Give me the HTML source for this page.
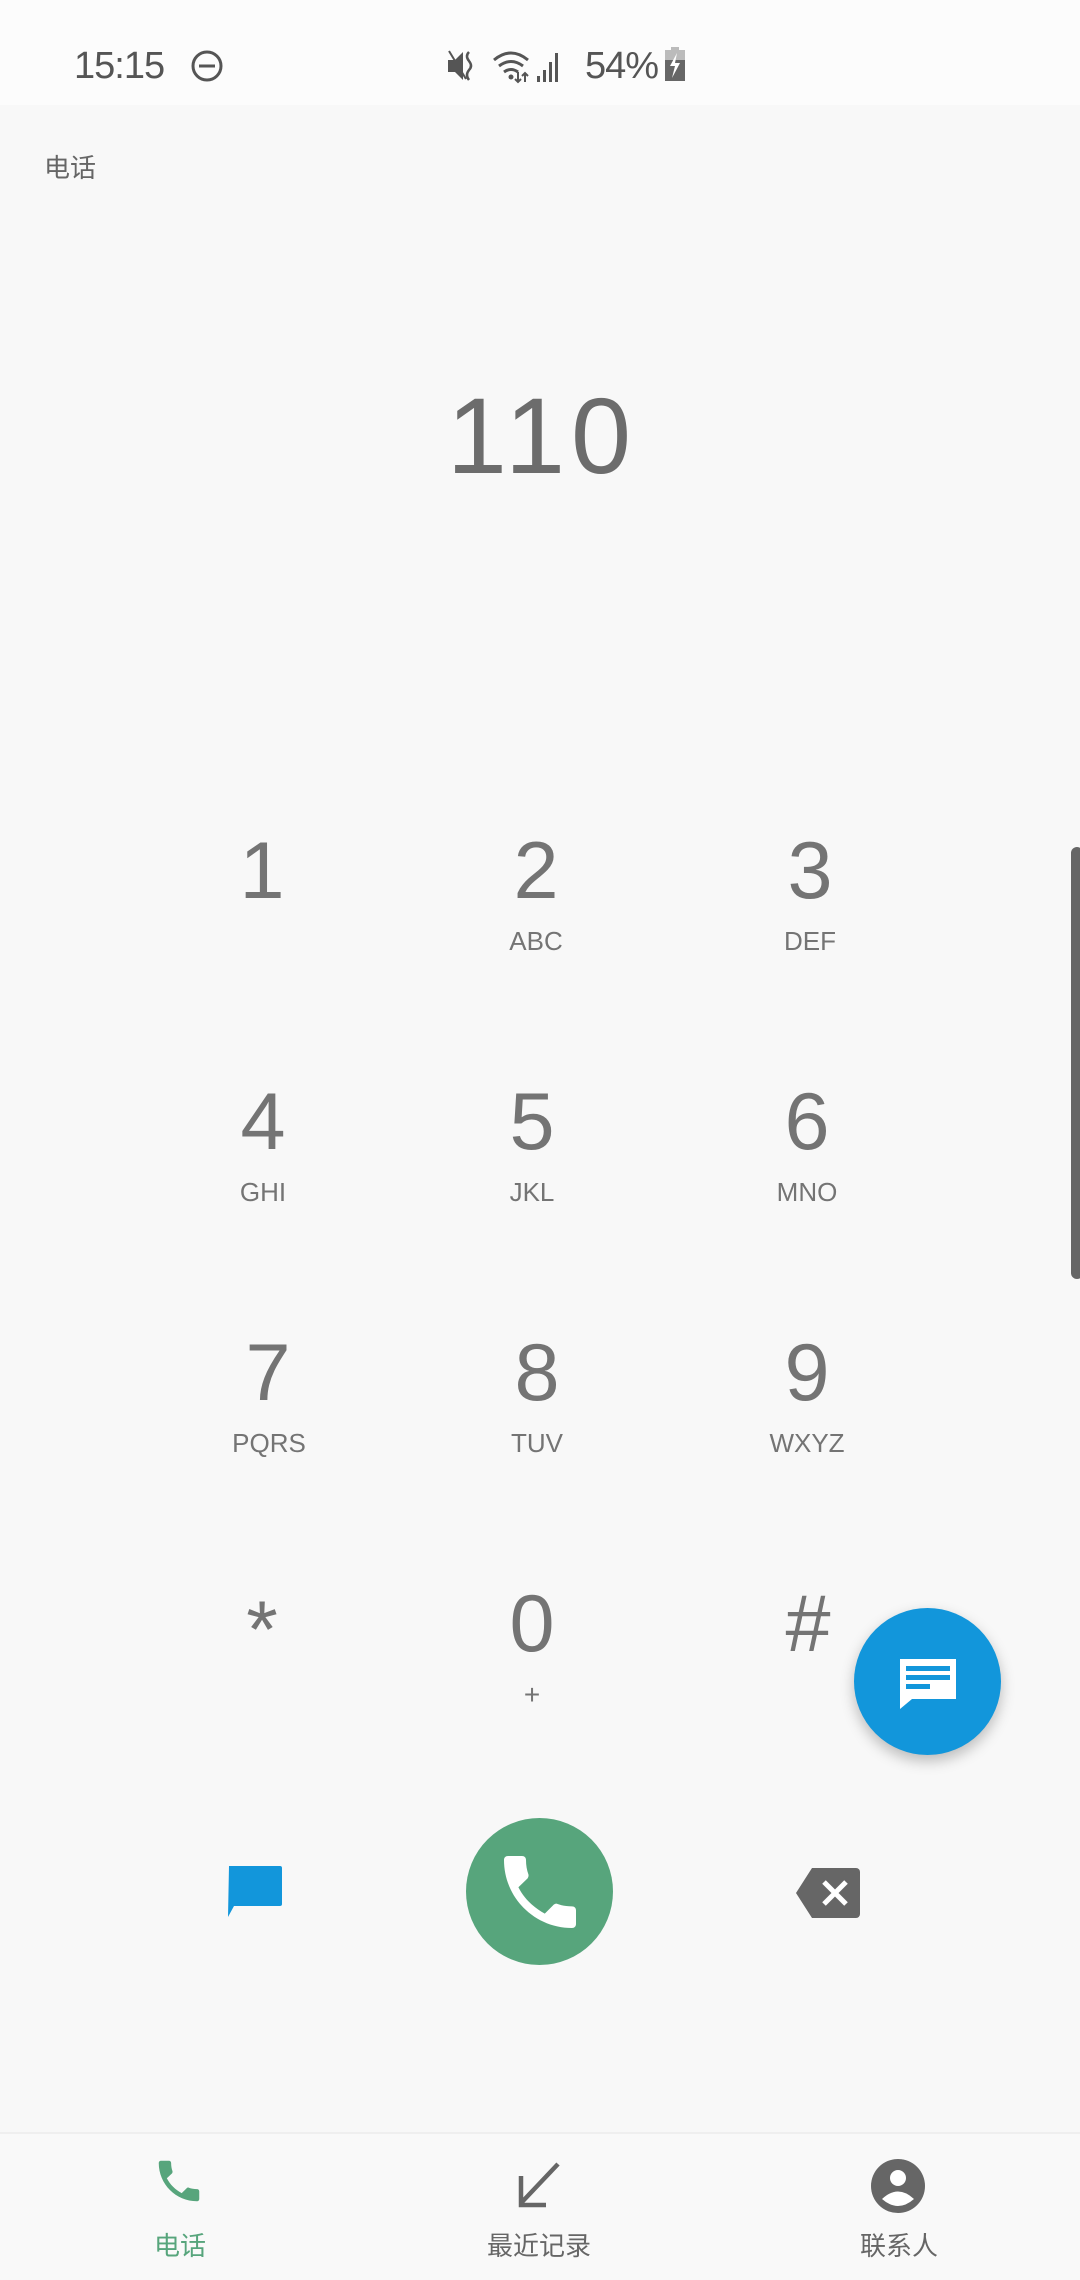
<!DOCTYPE html>
<html><head><meta charset="utf-8"><style>
*{margin:0;padding:0;box-sizing:border-box}
body{width:1080px;height:2280px;background:#f8f8f8;position:relative;overflow:hidden;font-family:"Liberation Sans","Noto Sans CJK SC",sans-serif;color:#747474}
.a{position:absolute;line-height:1;white-space:nowrap}
.d{font-size:81px;width:200px;text-align:center;margin-left:-100px}
.l{font-size:26px;width:200px;text-align:center;margin-left:-100px}
.n{font-size:26px;width:200px;text-align:center;margin-left:-100px;font-family:"Noto Sans CJK SC",sans-serif}
</style></head><body>
<div style="position:absolute;left:0;top:0;width:1080px;height:105px;background:#fcfcfc"></div>
<div class="a" style="left:74px;top:47px;font-size:38px;color:#555;letter-spacing:-1px">15:15</div>
<svg class="a" style="left:190px;top:49px" width="34" height="34" viewBox="0 0 34 34"><circle cx="17" cy="17" r="14" fill="none" stroke="#555" stroke-width="3"/><rect x="9" y="15.5" width="16" height="3" fill="#555"/></svg>
<svg class="a" style="left:446px;top:48px" width="240" height="36" viewBox="0 0 240 36">
<path d="M2 12h7l8-8v28l-8-8H2z" fill="#555"/><path d="M23 4q-4 4 0 9q4 5 0 9q-4 5 0 10" fill="none" stroke="#555" stroke-width="2.5"/><path d="M3 3l17 28" stroke="#555" stroke-width="2"/>
<path d="M48 12q17-14 34 0M53 18q12-9 24 0M58 24q7-5 14 0" fill="none" stroke="#555" stroke-width="3"/><circle cx="65" cy="29" r="2.5" fill="#555"/>
<path d="M72 24v10M69 31l3 3 3-3M79 34v-9M76 28l3-3 3 3" stroke="#555" stroke-width="2" fill="none"/>
<rect x="91" y="28" width="3" height="6" fill="#555"/><rect x="97" y="22" width="3" height="12" fill="#555"/><rect x="103" y="14" width="3" height="20" fill="#555"/><rect x="109" y="5" width="3" height="29" fill="#555"/>
</svg>
<div class="a" style="left:585px;top:47px;font-size:38px;color:#555;letter-spacing:-1px">54%</div>
<svg class="a" style="left:664px;top:47px" width="24" height="36" viewBox="0 0 24 36"><rect x="7" y="0" width="8" height="4" fill="#bbb"/><rect x="1" y="3" width="20" height="10" fill="#bbb"/><rect x="1" y="13" width="20" height="21" fill="#666"/><path d="M13 6l-7 13h5l-3 12 8-15h-5z" fill="#fff"/></svg>
<div class="a n" style="left:70px;top:154px;color:#666">电话</div>

<div class="a" style="left:542px;top:382px;font-size:108px;width:400px;margin-left:-200px;text-align:center;color:#6c6c6c;letter-spacing:6px">110</div>

<div class="a d" style="left:262px;top:831px">1</div>
<div class="a d" style="left:536px;top:831px">2</div><div class="a l" style="left:536px;top:928px">ABC</div>
<div class="a d" style="left:810px;top:831px">3</div><div class="a l" style="left:810px;top:928px">DEF</div>
<div class="a d" style="left:263px;top:1082px">4</div><div class="a l" style="left:263px;top:1179px">GHI</div>
<div class="a d" style="left:532px;top:1082px">5</div><div class="a l" style="left:532px;top:1179px">JKL</div>
<div class="a d" style="left:807px;top:1082px">6</div><div class="a l" style="left:807px;top:1179px">MNO</div>
<div class="a d" style="left:268px;top:1333px">7</div><div class="a l" style="left:269px;top:1430px">PQRS</div>
<div class="a d" style="left:537px;top:1333px">8</div><div class="a l" style="left:537px;top:1430px">TUV</div>
<div class="a d" style="left:807px;top:1333px">9</div><div class="a l" style="left:807px;top:1430px">WXYZ</div>
<div class="a d" style="left:262px;top:1590px">*</div>
<div class="a d" style="left:532px;top:1584px">0</div><div class="a l" style="left:532px;top:1681px;font-size:28px">+</div>
<div class="a d" style="left:808px;top:1584px">#</div>

<div style="position:absolute;left:1071px;top:847px;width:12px;height:432px;border-radius:6px;background:#666"></div>

<div style="position:absolute;left:854px;top:1608px;width:147px;height:147px;border-radius:50%;background:#1296db;box-shadow:0 6px 14px rgba(0,0,0,.25)"></div>
<svg class="a" style="left:898px;top:1657px" width="60" height="54" viewBox="0 0 60 54"><path d="M2 2h56v40H14L2 52z" fill="#fff"/><rect x="8" y="9" width="44" height="5" fill="#1296db"/><rect x="8" y="18" width="44" height="5" fill="#1296db"/><rect x="8" y="27" width="24" height="5" fill="#1296db"/></svg>

<svg class="a" style="left:226px;top:1864px" width="56" height="54" viewBox="0 0 56 54"><path d="M3 2h51a2 2 0 0 1 2 2v36a2 2 0 0 1-2 2H8l-6 11z" fill="#1296db"/></svg>
<div style="position:absolute;left:466px;top:1818px;width:147px;height:147px;border-radius:50%;background:#57a57c"></div>
<svg class="a" style="left:492px;top:1844px" width="96" height="96" viewBox="0 0 24 24"><path d="M6.6 10.8c1.4 2.8 3.8 5.1 6.6 6.6l2.2-2.2c.3-.3.7-.4 1-.2 1.1.4 2.3.6 3.6.6.6 0 1 .4 1 1V20c0 .6-.4 1-1 1C10.6 21 3 13.4 3 4c0-.6.4-1 1-1h3.5c.6 0 1 .4 1 1 0 1.3.2 2.5.6 3.6.1.3 0 .7-.2 1z" fill="#fff"/></svg>
<svg class="a" style="left:796px;top:1868px" width="64" height="50" viewBox="0 0 64 50"><path d="M16 0h44a4 4 0 0 1 4 4v42a4 4 0 0 1-4 4H16L0 25z" fill="#666"/><path d="M28 14l22 22M50 14L28 36" stroke="#fff" stroke-width="5"/></svg>

<div style="position:absolute;left:0;top:2132px;width:1080px;height:148px;background:#f9f9f9;border-top:2px solid #efefef"></div>
<svg class="a" style="left:152px;top:2154px" width="54" height="54" viewBox="0 0 24 24"><path d="M6.6 10.8c1.4 2.8 3.8 5.1 6.6 6.6l2.2-2.2c.3-.3.7-.4 1-.2 1.1.4 2.3.6 3.6.6.6 0 1 .4 1 1V20c0 .6-.4 1-1 1C10.6 21 3 13.4 3 4c0-.6.4-1 1-1h3.5c.6 0 1 .4 1 1 0 1.3.2 2.5.6 3.6.1.3 0 .7-.2 1z" fill="#57a57c"/></svg>
<svg class="a" style="left:514px;top:2162px" width="50" height="46" viewBox="0 0 50 46"><path d="M44 2L8 40M7 14v29h25" fill="none" stroke="#666" stroke-width="4.5"/></svg>
<svg class="a" style="left:870px;top:2158px" width="56" height="56" viewBox="0 0 56 56"><circle cx="28" cy="28" r="27" fill="#666"/><circle cx="28" cy="20" r="8" fill="#fff"/><path d="M12 41q16-15 32 0q-16 14-32 0z" fill="#fff"/></svg>
<div class="a n" style="left:180px;top:2232px;color:#57a57c">电话</div>
<div class="a n" style="left:539px;top:2232px;color:#666">最近记录</div>
<div class="a n" style="left:899px;top:2232px;color:#666">联系人</div>
</body></html>
